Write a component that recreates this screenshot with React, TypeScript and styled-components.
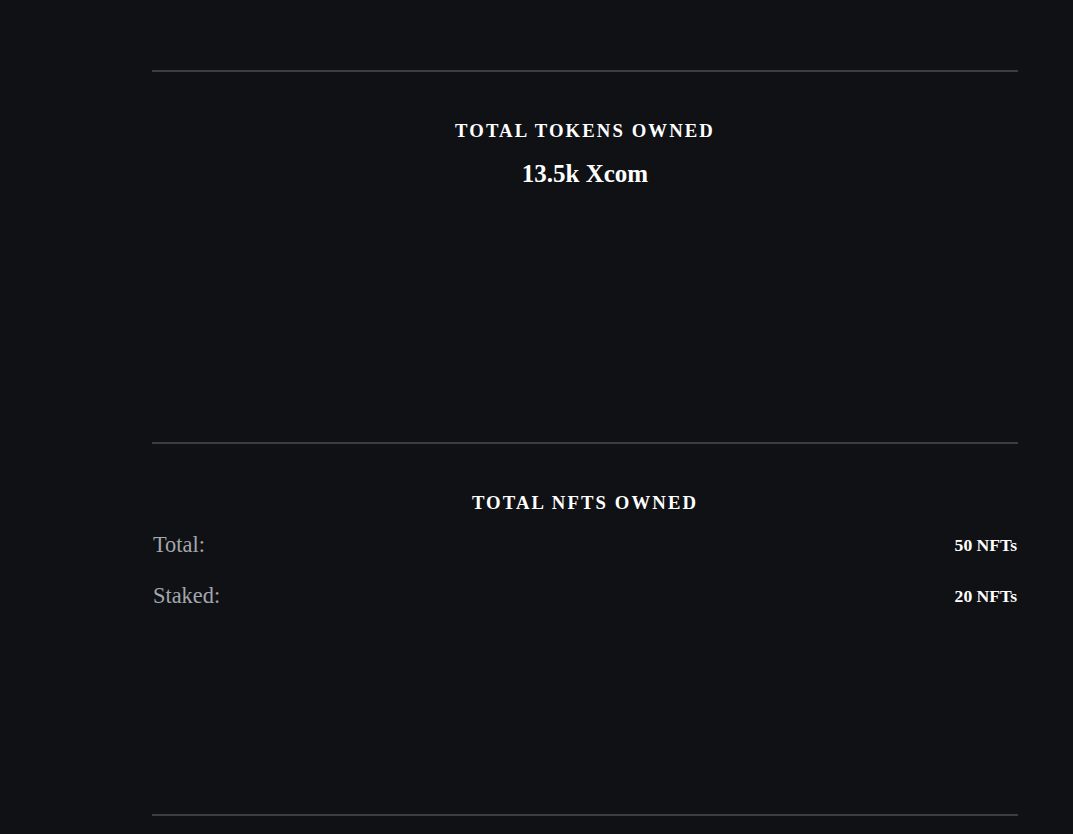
import React from "react";
import styled, { createGlobalStyle } from "styled-components";

const Global = createGlobalStyle`
  html, body { margin: 0; padding: 0; background: #0f1115; }
  body { font-family: "Liberation Serif", "Times New Roman", serif; color: #ffffff; }
`;

const Page = styled.div`
  min-height: 834px;
  padding: 70px 0 0 152px;
  box-sizing: border-box;
`;

const Column = styled.div`
  width: 866px;
  display: flex;
  flex-direction: column;
`;

const Section = styled.section`
  border-top: 2px solid #3c3d41;
  height: 372px;
  box-sizing: border-box;
  padding-top: 48px;
  display: flex;
  flex-direction: column;
  align-items: stretch;
`;

const Title = styled.h3`
  margin: 0;
  text-align: center;
  font-size: 18.72px;
  font-weight: 700;
  letter-spacing: 2.1px;
  line-height: 22px;
  color: #ffffff;
`;

const Value = styled.h2`
  margin: 18px 0 0;
  text-align: center;
  font-size: 25px;
  font-weight: 700;
  line-height: 28px;
  color: #ffffff;
`;

const Rows = styled.div`
  margin-top: 18px;
  display: flex;
  flex-direction: column;
  gap: 25px;
`;

const Row = styled.div`
  display: flex;
  justify-content: space-between;
  align-items: center;
  height: 26px;
  padding: 0 1px;
`;

const Label = styled.span`
  font-size: 22.4px;
  color: #a3a7ae;
`;

const Amount = styled.span`
  font-size: 17.6px;
  font-weight: 700;
  color: #ffffff;
`;

export default function App() {
  return (
    <>
      <Global />
      <Page>
        <Column>
          <Section>
            <Title>TOTAL TOKENS OWNED</Title>
            <Value>13.5k Xcom</Value>
          </Section>
          <Section>
            <Title>TOTAL NFTS OWNED</Title>
            <Rows>
              <Row>
                <Label>Total:</Label>
                <Amount>50 NFTs</Amount>
              </Row>
              <Row>
                <Label>Staked:</Label>
                <Amount>20 NFTs</Amount>
              </Row>
            </Rows>
          </Section>
          <Section />
        </Column>
      </Page>
    </>
  );
}
